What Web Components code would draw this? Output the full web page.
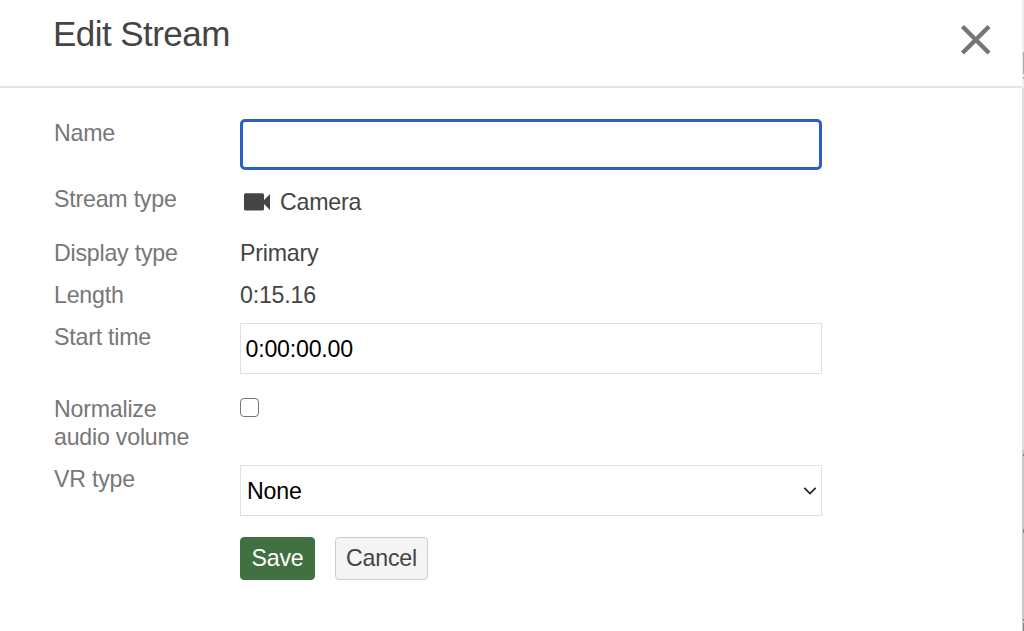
<!DOCTYPE html>
<html lang="en"><head><meta charset="utf-8"><title>Edit Stream</title>
<style>html,body{margin:0;height:100%;overflow:hidden;background:#fff}</style></head><body>
<stream-dialog></stream-dialog>
<script>
class BaseElement extends HTMLElement{
  connectedCallback(){
    if(this.shadowRoot)return;
    this.attachShadow({mode:'open'}).innerHTML='<style>*{box-sizing:border-box}'+this.constructor.css+'</style>'+this.constructor.html;
  }
}
class DialogHeader extends BaseElement{
  static css=`:host{display:flex;justify-content:space-between;align-items:flex-start;height:88px;border-bottom:2px solid #e4e4e4;box-sizing:border-box;padding:14px 32px 0 53px}
  h1{margin:0;font-size:35px;letter-spacing:-.55px;line-height:40px;font-weight:400;color:#444}
  button{border:0;background:none;padding:0;margin-top:10px;width:32px;height:32px}svg{display:block}`;
  static html=`<h1><slot></slot></h1><button aria-label="Close"><svg width="32" height="32" viewBox="0 0 32 32"><path d="M2.5 2.5L29 29M29 2.5L2.5 29" stroke="#757575" stroke-width="4.4" fill="none"/></svg></button>`;
}
class FormRow extends BaseElement{
  static css=`:host{display:grid;grid-template-columns:186px 582px;align-items:start;line-height:28px;height:var(--row)}
  .label{color:#777}.value{color:#444}`;
  static html=`<div class="label"><slot name="label"></slot></div><div class="value"><slot></slot></div>`;
}
class TextField extends BaseElement{
  static css=`:host{display:block}
  .box{display:flex;align-items:center;height:51px;width:582px;border:1.5px solid #e0e0e0;background:#fff;color:#000;padding:0 4.5px}
  :host([active]) .box{border:3px solid #285fc8;border-radius:5px}`;
  static html=`<div class="box"><slot></slot></div>`;
}
class SelectField extends BaseElement{
  static css=`:host{display:block}
  .box{display:flex;align-items:center;justify-content:space-between;height:51px;width:582px;border:1.5px solid #e0e0e0;color:#000;padding:0 4px 0 6px}svg{display:block}`;
  static html=`<div class="box"><span><slot></slot></span><svg width="14" height="10" viewBox="0 0 14 10"><path d="M1.3 1.9L7 7.5L12.7 1.9" fill="none" stroke="#222" stroke-width="1.7"/></svg></div>`;
}
class CheckField extends BaseElement{
  static css=`:host{display:block;padding-top:3px}div{width:19px;height:19px;border:1.4px solid #757575;border-radius:4px;background:#fff}`;
  static html=`<div role="checkbox" aria-checked="false"></div>`;
}
class CameraLabel extends BaseElement{
  static css=`:host{display:flex;align-items:center;gap:10px;padding:3px 0 0 4px}svg{display:block;margin-top:-1px}`;
  static html=`<svg width="26" height="18" viewBox="0 0 26 18"><path d="M1.5 0.2H18.5Q20 .2 20 1.7V7L26 1V17L20 11V16.1Q20 17.6 18.5 17.6H1.5Q0 17.6 0 16.1V1.7Q0 .2 1.5 .2Z" fill="#444"/></svg><span><slot></slot></span>`;
}
class ActionButton extends BaseElement{
  static css=`:host{display:block}button{display:flex;align-items:center;justify-content:center;font:inherit;letter-spacing:inherit;line-height:28px;height:43px;padding:0 0 1px;width:93px;color:#444;background:#f4f4f4;border:1.5px solid #ccc;border-radius:4px;white-space:nowrap}
  :host([primary]) button{width:75px;color:#fff;background:#417141;border-color:#417141}`;
  static html=`<button><slot></slot></button>`;
}
class PageEdge extends BaseElement{
  static css=`:host{position:absolute;right:0;top:0;width:2px;height:631px}svg{display:block}`;
  static html=`<svg width="2" height="631"><path fill="#eee" d="M0 0h2v88h-2z"/><path fill="#dcdcdc" d="M0 88h2v362h-2z"/><path fill="#c8c8c8" d="M0 450h2v181h-2z"/><path fill="#aaa" d="M1 52h1v22h-1zM1 77h1v2h-1z"/><path fill="#888" d="M1 454h1v2h-1zM1 529h1v4h-1zM1 619h1v2h-1zM1 623h1v8h-1z"/></svg>`;
}
class StreamDialog extends BaseElement{
  static css=`:host{display:block;position:relative;width:1024px;height:631px;overflow:hidden;background:#fff;font-family:"Liberation Sans",Arial,sans-serif;font-size:23.2px;letter-spacing:-.22px}
  main{padding:31px 0 0 54px}.actions{display:flex;gap:20px;padding-left:186px}`;
  static html=`<dialog-header>Edit Stream</dialog-header><main>
  <form-row style="--row:66px"><span slot="label">Name</span><text-field active></text-field></form-row>
  <form-row style="--row:54px"><span slot="label">Stream type</span><camera-label>Camera</camera-label></form-row>
  <form-row style="--row:42px"><span slot="label">Display type</span>Primary</form-row>
  <form-row style="--row:42px"><span slot="label">Length</span>0:15.16</form-row>
  <form-row style="--row:72px"><span slot="label">Start time</span><text-field>0:00:00.00</text-field></form-row>
  <form-row style="--row:70px"><span slot="label">Normalize<br>audio volume</span><check-field></check-field></form-row>
  <form-row style="--row:72px"><span slot="label">VR type</span><select-field>None</select-field></form-row>
  <div class="actions"><action-button primary>Save</action-button><action-button>Cancel</action-button></div>
  </main><page-edge></page-edge>`;
}
customElements.define('dialog-header',DialogHeader);
customElements.define('form-row',FormRow);
customElements.define('text-field',TextField);
customElements.define('select-field',SelectField);
customElements.define('check-field',CheckField);
customElements.define('camera-label',CameraLabel);
customElements.define('action-button',ActionButton);
customElements.define('page-edge',PageEdge);
customElements.define('stream-dialog',StreamDialog);
</script></body></html>
